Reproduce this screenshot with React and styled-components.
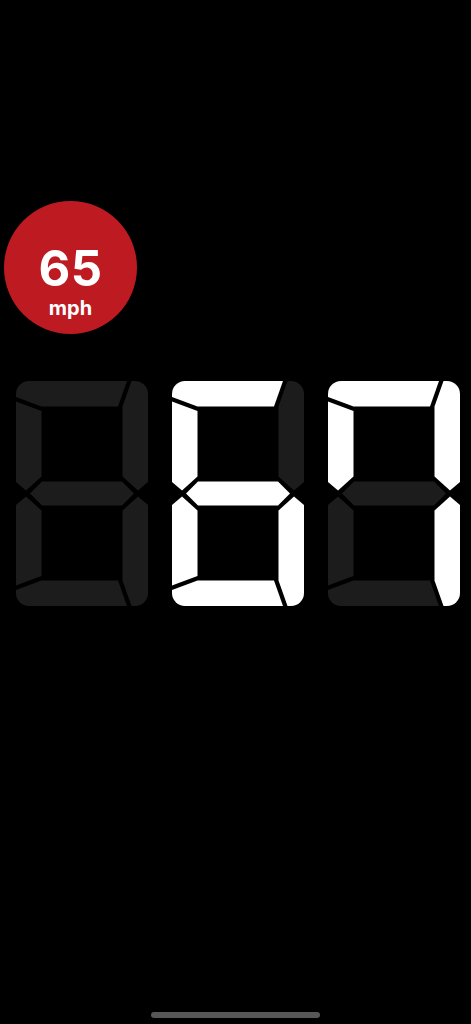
import React from 'react'
import styled, { createGlobalStyle } from 'styled-components'

const Global = createGlobalStyle`
  html, body {
    margin: 0;
    padding: 0;
    background: #000;
  }
  body {
    font-family: Inter, "Liberation Sans", sans-serif;
  }
`

const Screen = styled.div`
  width: 471px;
  height: 1024px;
  background: #000;
  display: flex;
  flex-direction: column;
  padding-top: 201px;
  box-sizing: border-box;
  overflow: hidden;
`

// speed limit badge
const Badge = styled.div`
  width: 133px;
  height: 133px;
  margin-left: 4px;
  border-radius: 50%;
  background: #be1a21;
  color: #fff;
  display: flex;
  flex-direction: column;
  align-items: center;
  box-sizing: border-box;
  padding-top: 48px;
`

const Limit = styled.div`
  font-size: 49px;
  font-weight: 700;
  line-height: 40px;
  letter-spacing: 0.5px;
`

const Unit = styled.div`
  font-size: 20px;
  font-weight: 700;
  line-height: 16px;
  margin-top: 11px;
`

const DigitsRow = styled.div`
  display: flex;
  gap: 24px;
  margin-top: 47px;
  padding-left: 16px;
`

const Digit = styled.svg`
  width: 132px;
  height: 225px;
  display: block;
`

const Segment = styled.path`
  fill: ${(p) => (p.$on ? '#ffffff' : '#1c1c1c')};
`

const HomeBar = styled.div`
  width: 169px;
  height: 6px;
  border-radius: 3px;
  background: #575757;
  margin: auto auto 6px;
`

const SEGMENTS = {
  a: 'M0,16 L0,13 A13,13 0 0 1 13,0 L111,0 L102,25.5 L25.5,25.5 Z',
  b: 'M115.5,0 L119,0 A13,13 0 0 1 132,13 L132,101 L122,109.5 L106.5,95.5 L106.5,25.5 Z',
  c: 'M115.5,225 L119,225 A13,13 0 0 0 132,212 L132,124 L122,115.5 L106.5,129.5 L106.5,199.5 Z',
  d: 'M0,209 L0,212 A13,13 0 0 0 13,225 L111,225 L102,199.5 L25.5,199.5 Z',
  e: 'M0,204.5 L25.5,195 L25.5,129.5 L10,115.5 L0,124 Z',
  f: 'M0,20.5 L25.5,30 L25.5,95.5 L10,109.5 L0,101 Z',
  g: 'M14,112.5 L26,100.5 L106,100.5 L118,112.5 L106,124.5 L26,124.5 Z',
}

const SevenSeg = ({ lit }) => (
  <Digit viewBox="0 0 132 225">
    {Object.keys(SEGMENTS).map((k) => (
      <Segment key={k} d={SEGMENTS[k]} $on={lit.includes(k)} />
    ))}
  </Digit>
)

const digits = ['', 'acdefg', 'abcf']

const App = () => {
  return (
    <>
      <Global />
      <Screen>
        <Badge>
          <Limit>65</Limit>
          <Unit>mph</Unit>
        </Badge>
        <DigitsRow>
          {digits.map((d, i) => (
            <SevenSeg key={i} lit={d} />
          ))}
        </DigitsRow>
        <HomeBar />
      </Screen>
    </>
  )
}

export default App
